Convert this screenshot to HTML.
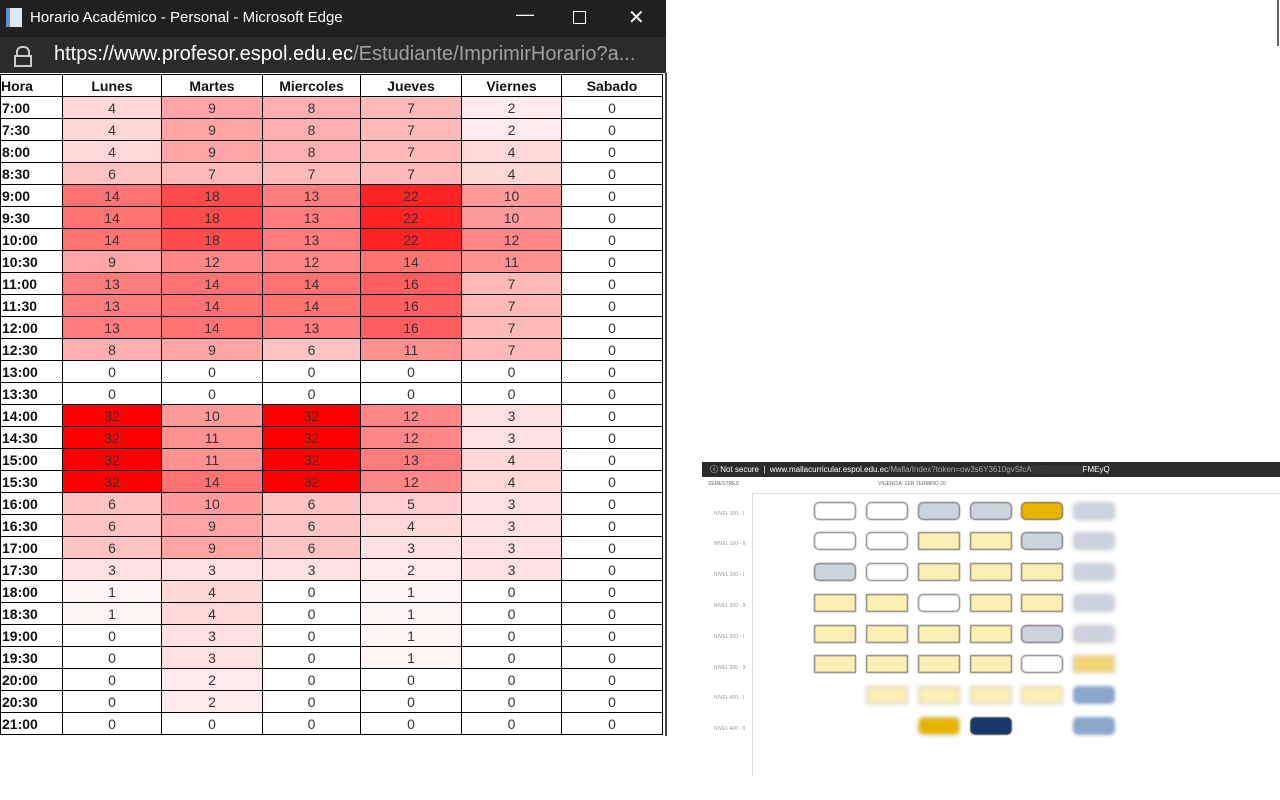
<!DOCTYPE html>
<html><head><meta charset="utf-8"><style>
*{margin:0;padding:0;box-sizing:border-box}
body{width:1280px;height:800px;background:#fff;position:relative;overflow:hidden;font-family:"Liberation Sans",Arial,sans-serif}
#title{position:absolute;left:0;top:0;width:666px;height:37px;background:#202020;color:#fff;font-size:15px}
#title .t{position:absolute;left:30px;top:9px}
#title .ic{position:absolute;left:6px;top:8px;width:16px;height:19px;background:#dfe6ee;border-left:4px solid #5b8fd0}
#addr{position:absolute;left:0;top:37px;width:666px;height:36px;background:#2b2b2b;color:#fff;font-size:20px}
#addr .u{position:absolute;left:54px;top:6px}
#addr .g{color:#a0a0a0}
#win{position:absolute;left:0;top:73px;width:667px;height:663px;background:#fff;border-right:2px solid #444}
table{position:absolute;left:0;top:1px;border-collapse:collapse;font-size:14px;color:#333}
td,th{border:1px solid #000;height:22px;text-align:center;padding:0}
th{font-weight:bold;color:#111}
td.h{text-align:left;font-weight:bold;color:#111;padding-left:1px}
.c1{background:#fff5f5}.c2{background:#ffebeb}.c3{background:#ffe1e1}.c4{background:#ffd7d7}.c5{background:#ffcdcd}.c6{background:#ffc3c3}.c7{background:#ffb9b9}.c8{background:#ffafaf}.c9{background:#ffa5a5}.c10{background:#ff9b9b}.c11{background:#ff9191}.c12{background:#ff8787}.c13{background:#ff7d7d}.c14{background:#ff7373}.c16{background:#ff5f5f}.c18{background:#ff4b4b}.c22{background:#ff2323}.c32{background:#ff0000}
#thumb{position:absolute;left:702px;top:462px;width:578px;height:314px;background:#fff}
#tb{position:absolute;left:0;top:0;width:578px;height:15px;background:#2b2b2b;color:#fff;font-size:8px;line-height:15px;padding-left:8px;white-space:nowrap}
#frame{position:absolute;left:50px;top:31px;width:528px;height:283px;border-left:1px solid #ddd;border-top:1px solid #ddd}
.b{position:absolute;width:42px;height:18px;border-radius:5px;border:1px solid #555;filter:blur(.6px)}
.w{background:#fff}.gr{background:#ccd3dc}.y{background:#fbefb4;border-radius:1px}.go{background:#e8b400}.bl{background:#8aa8cc;border-color:#8aa8cc;filter:blur(1.5px)}.nv{background:#16386a}.fz{filter:blur(2px);border-color:#bbb}
.lbl{position:absolute;left:12px;font-size:5px;color:#999}
</style></head><body>
<div id="title"><div class="ic"></div><span class="t">Horario Académico - Personal - Microsoft Edge</span>
<span style="position:absolute;left:516px;top:4px;font-size:18px">—</span>
<span style="position:absolute;left:573px;top:11px;width:13px;height:13px;border:1px solid #fff"></span>
<span style="position:absolute;left:628px;top:5px;font-size:20px">✕</span></div>
<div id="addr"><span style="position:absolute;left:16px;top:9px;width:14px;height:10px;border:2px solid #ccc;border-bottom:none;border-radius:6px 6px 0 0"></span><span style="position:absolute;left:14px;top:18px;width:18px;height:12px;border:2px solid #ccc"></span>
<span class="u">https://www.profesor.espol.edu.ec<span class="g">/Estudiante/ImprimirHorario?a...</span></span></div>
<div id="win"><table>
<tr><th style="width:62px;text-align:left">Hora</th><th style="width:99px">Lunes</th><th style="width:101px">Martes</th><th style="width:98px">Miercoles</th><th style="width:101px">Jueves</th><th style="width:100px">Viernes</th><th style="width:101px">Sabado</th></tr>
<tr><td class="h">7:00</td><td class="c4">4</td><td class="c9">9</td><td class="c8">8</td><td class="c7">7</td><td class="c2">2</td><td>0</td></tr>
<tr><td class="h">7:30</td><td class="c4">4</td><td class="c9">9</td><td class="c8">8</td><td class="c7">7</td><td class="c2">2</td><td>0</td></tr>
<tr><td class="h">8:00</td><td class="c4">4</td><td class="c9">9</td><td class="c8">8</td><td class="c7">7</td><td class="c4">4</td><td>0</td></tr>
<tr><td class="h">8:30</td><td class="c6">6</td><td class="c7">7</td><td class="c7">7</td><td class="c7">7</td><td class="c4">4</td><td>0</td></tr>
<tr><td class="h">9:00</td><td class="c14">14</td><td class="c18">18</td><td class="c13">13</td><td class="c22">22</td><td class="c10">10</td><td>0</td></tr>
<tr><td class="h">9:30</td><td class="c14">14</td><td class="c18">18</td><td class="c13">13</td><td class="c22">22</td><td class="c10">10</td><td>0</td></tr>
<tr><td class="h">10:00</td><td class="c14">14</td><td class="c18">18</td><td class="c13">13</td><td class="c22">22</td><td class="c12">12</td><td>0</td></tr>
<tr><td class="h">10:30</td><td class="c9">9</td><td class="c12">12</td><td class="c12">12</td><td class="c14">14</td><td class="c11">11</td><td>0</td></tr>
<tr><td class="h">11:00</td><td class="c13">13</td><td class="c14">14</td><td class="c14">14</td><td class="c16">16</td><td class="c7">7</td><td>0</td></tr>
<tr><td class="h">11:30</td><td class="c13">13</td><td class="c14">14</td><td class="c14">14</td><td class="c16">16</td><td class="c7">7</td><td>0</td></tr>
<tr><td class="h">12:00</td><td class="c13">13</td><td class="c14">14</td><td class="c13">13</td><td class="c16">16</td><td class="c7">7</td><td>0</td></tr>
<tr><td class="h">12:30</td><td class="c8">8</td><td class="c9">9</td><td class="c6">6</td><td class="c11">11</td><td class="c7">7</td><td>0</td></tr>
<tr><td class="h">13:00</td><td>0</td><td>0</td><td>0</td><td>0</td><td>0</td><td>0</td></tr>
<tr><td class="h">13:30</td><td>0</td><td>0</td><td>0</td><td>0</td><td>0</td><td>0</td></tr>
<tr><td class="h">14:00</td><td class="c32">32</td><td class="c10">10</td><td class="c32">32</td><td class="c12">12</td><td class="c3">3</td><td>0</td></tr>
<tr><td class="h">14:30</td><td class="c32">32</td><td class="c11">11</td><td class="c32">32</td><td class="c12">12</td><td class="c3">3</td><td>0</td></tr>
<tr><td class="h">15:00</td><td class="c32">32</td><td class="c11">11</td><td class="c32">32</td><td class="c13">13</td><td class="c4">4</td><td>0</td></tr>
<tr><td class="h">15:30</td><td class="c32">32</td><td class="c14">14</td><td class="c32">32</td><td class="c12">12</td><td class="c4">4</td><td>0</td></tr>
<tr><td class="h">16:00</td><td class="c6">6</td><td class="c10">10</td><td class="c6">6</td><td class="c5">5</td><td class="c3">3</td><td>0</td></tr>
<tr><td class="h">16:30</td><td class="c6">6</td><td class="c9">9</td><td class="c6">6</td><td class="c4">4</td><td class="c3">3</td><td>0</td></tr>
<tr><td class="h">17:00</td><td class="c6">6</td><td class="c9">9</td><td class="c6">6</td><td class="c3">3</td><td class="c3">3</td><td>0</td></tr>
<tr><td class="h">17:30</td><td class="c3">3</td><td class="c3">3</td><td class="c3">3</td><td class="c2">2</td><td class="c3">3</td><td>0</td></tr>
<tr><td class="h">18:00</td><td class="c1">1</td><td class="c4">4</td><td>0</td><td class="c1">1</td><td>0</td><td>0</td></tr>
<tr><td class="h">18:30</td><td class="c1">1</td><td class="c4">4</td><td>0</td><td class="c1">1</td><td>0</td><td>0</td></tr>
<tr><td class="h">19:00</td><td>0</td><td class="c3">3</td><td>0</td><td class="c1">1</td><td>0</td><td>0</td></tr>
<tr><td class="h">19:30</td><td>0</td><td class="c3">3</td><td>0</td><td class="c1">1</td><td>0</td><td>0</td></tr>
<tr><td class="h">20:00</td><td>0</td><td class="c2">2</td><td>0</td><td>0</td><td>0</td><td>0</td></tr>
<tr><td class="h">20:30</td><td>0</td><td class="c2">2</td><td>0</td><td>0</td><td>0</td><td>0</td></tr>
<tr><td class="h">21:00</td><td>0</td><td>0</td><td>0</td><td>0</td><td>0</td><td>0</td></tr>
</table></div>
<div style="position:absolute;left:1277px;top:0;width:2px;height:46px;background:#666"></div>
<div id="thumb">
<div id="tb">ⓘ Not secure &nbsp;|&nbsp; www.mallacurricular.espol.edu.ec<span style="color:#aaa">/Malla/Index?token=ow3s6Y3610gvSfcA</span><span style="color:#777">░░░░░░░░░</span>FMEyQ</div>
<div style="position:absolute;left:6px;top:19px;font-size:5px;color:#666">SEMESTRES</div>
<div style="position:absolute;left:176px;top:19px;font-size:5px;color:#666">VIGENCIA: 1ER TERMINO 20</div>
<div id="frame"></div>
<div class="lbl" style="top:49px">NIVEL 100 - I</div><div class="lbl" style="top:79px">NIVEL 100 - II</div><div class="lbl" style="top:110px">NIVEL 200 - I</div><div class="lbl" style="top:141px">NIVEL 200 - II</div><div class="lbl" style="top:172px">NIVEL 300 - I</div><div class="lbl" style="top:203px">NIVEL 300 - II</div><div class="lbl" style="top:233px">NIVEL 400 - I</div><div class="lbl" style="top:264px">NIVEL 400 - II</div>
<div class="b w" style="left:112px;top:40px"></div><div class="b w" style="left:164px;top:40px"></div><div class="b gr" style="left:216px;top:40px"></div><div class="b gr" style="left:268px;top:40px"></div><div class="b go" style="left:319px;top:40px"></div><div class="b gr fz" style="left:371px;top:40px"></div>
<div class="b w" style="left:112px;top:70px"></div><div class="b w" style="left:164px;top:70px"></div><div class="b y" style="left:216px;top:70px"></div><div class="b y" style="left:268px;top:70px"></div><div class="b gr" style="left:319px;top:70px"></div><div class="b gr fz" style="left:371px;top:70px"></div>
<div class="b gr" style="left:112px;top:101px"></div><div class="b w" style="left:164px;top:101px"></div><div class="b y" style="left:216px;top:101px"></div><div class="b y" style="left:268px;top:101px"></div><div class="b y" style="left:319px;top:101px"></div><div class="b gr fz" style="left:371px;top:101px"></div>
<div class="b y" style="left:112px;top:132px"></div><div class="b y" style="left:164px;top:132px"></div><div class="b w" style="left:216px;top:132px"></div><div class="b y" style="left:268px;top:132px"></div><div class="b y" style="left:319px;top:132px"></div><div class="b gr fz" style="left:371px;top:132px"></div>
<div class="b y" style="left:112px;top:163px"></div><div class="b y" style="left:164px;top:163px"></div><div class="b y" style="left:216px;top:163px"></div><div class="b y" style="left:268px;top:163px"></div><div class="b gr" style="left:319px;top:163px"></div><div class="b gr fz" style="left:371px;top:163px"></div>
<div class="b y" style="left:112px;top:193px"></div><div class="b y" style="left:164px;top:193px"></div><div class="b y" style="left:216px;top:193px"></div><div class="b y" style="left:268px;top:193px"></div><div class="b w" style="left:319px;top:193px"></div><div class="b y fz" style="left:371px;top:193px;background:#f5d77a"></div>
<div class="b y fz" style="left:164px;top:224px"></div><div class="b y fz" style="left:216px;top:224px"></div><div class="b y fz" style="left:268px;top:224px"></div><div class="b y fz" style="left:319px;top:224px"></div><div class="b bl" style="left:371px;top:224px"></div>
<div class="b go fz" style="left:216px;top:255px"></div><div class="b nv" style="left:268px;top:255px"></div><div class="b bl" style="left:371px;top:255px"></div>
</div>
</body></html>
